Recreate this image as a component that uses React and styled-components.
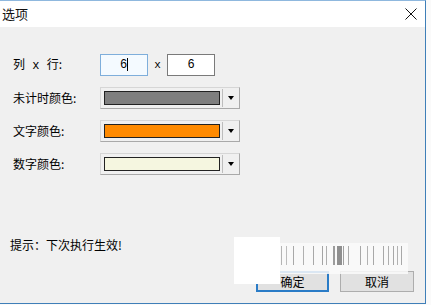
import React from 'react';
import styled, { createGlobalStyle } from 'styled-components';

const Global = createGlobalStyle`
  html, body { margin: 0; padding: 0; background: #fafafa; }
  body { font-family: "Noto Sans CJK SC", "Microsoft YaHei", sans-serif; color: #000; }
  * { box-sizing: border-box; }
`;

const Window = styled.div`
  position: relative;
  width: 426px;
  height: 304px;
  border-top: 1px solid #8fb8de;
  border-right: 1px solid #3f7fb8;
  border-bottom: 1px solid #3f7fb8;
  display: flex;
  flex-direction: column;
  background: #f0f0f0;
`;

const TitleBar = styled.div`
  height: 26px;
  flex: none;
  background: #fff;
  display: flex;
  align-items: center;
  justify-content: space-between;
  padding-left: 2px;
  padding-right: 8px;
  font-size: 13px;
  line-height: 16px;
  color: #111;
`;

const CloseIcon = styled.svg`
  display: block;
  width: 12px;
  height: 12px;
`;

const Body = styled.div`
  flex: 1;
  display: flex;
  flex-direction: column;
  padding: 21px 11px 11px 10px;
`;

const Form = styled.div`
  display: grid;
  grid-template-columns: 87px auto;
  grid-auto-rows: 33px;
  align-items: center;
  margin-left: 3px;
`;

const Label = styled.div`
  font-size: 12px;
  line-height: 16px;
  white-space: pre;
`;

const Mono = styled.span`
  font-family: "Liberation Mono", "DejaVu Sans Mono", monospace;
  font-size: 12px;
`;

const SizeRow = styled.div`
  display: flex;
  align-items: center;
`;

const TextBox = styled.div`
  width: 48px;
  height: 22px;
  border: 1px solid ${(p) => (p.$focused ? '#7eaedb' : '#7a7a7a')};
  background: ${(p) => (p.$focused ? '#f4faff' : '#fff')};
  display: flex;
  align-items: center;
  justify-content: center;
  font-family: "Liberation Mono", "DejaVu Sans Mono", monospace;
  font-size: 12px;
  line-height: 14px;
`;

const Caret = styled.span`
  display: inline-block;
  width: 1px;
  height: 13px;
  background: #000;
`;

const Times = styled.div`
  width: 19px;
  text-align: center;
  font-family: "Liberation Mono", "DejaVu Sans Mono", monospace;
  font-size: 11px;
  line-height: 14px;
`;

const Combo = styled.div`
  width: 140px;
  height: 22px;
  display: flex;
  align-items: center;
  background: #f0f0f0;
  border: 1px solid #d6d6d6;
  border-right-color: #a9a9a9;
  border-bottom-color: #a9a9a9;
  padding-left: 3px;
`;

const Swatch = styled.div`
  width: 116px;
  height: 14px;
  border: 1px solid #222;
  background: ${(p) => p.$color};
`;

const Divider = styled.div`
  width: 1px;
  height: 18px;
  margin-left: 2px;
  background: #bdbdbd;
`;

const Arrow = styled.div`
  flex: 1;
  display: flex;
  align-items: center;
  justify-content: center;
  &::after {
    content: '';
    border-left: 3.5px solid transparent;
    border-right: 3.5px solid transparent;
    border-top: 4px solid #000;
  }
`;

const Hint = styled.div`
  margin-top: auto;
  margin-bottom: 18px;
  font-size: 12px;
  line-height: 16px;
`;

const Footer = styled.div`
  display: flex;
  justify-content: flex-end;
  gap: 11px;
`;

const Button = styled.div`
  width: ${(p) => p.$w}px;
  height: 21px;
  display: flex;
  align-items: center;
  justify-content: center;
  font-size: 12px;
  line-height: 14px;
  background: #e1e1e1;
  border: ${(p) => (p.$primary ? '2px solid #2a7cc7' : '1px solid #adadad')};
`;

const WhiteBox = styled.div`
  position: absolute;
  left: 234px;
  top: 236px;
  width: 46px;
  height: 47px;
  background: #fff;
`;

const Stripes = styled.svg`
  position: absolute;
  left: 280px;
  top: 242px;
  width: 128px;
  height: 31px;
`;

const stripeData = [
  [1, 1, '#b4b4b4'], [6, 1, '#bcbcbc'], [13, 1, '#a8a8a8'], [23, 1, '#b0b0b0'],
  [33, 1, '#a8a8a8'], [42, 1, '#a4a4a4'], [46, 1, '#aeaeae'], [53, 2, '#9c9c9c'],
  [57, 5, '#8f8f8f'], [63, 1, '#a0a0a0'], [68, 1, '#acacac'], [80, 1, '#a8a8a8'],
  [87, 1, '#b2b2b2'], [93, 1, '#a8a8a8'], [103, 1, '#a8a8a8'], [108, 1, '#aeaeae'],
  [113, 1, '#a8a8a8'], [117, 1, '#b2b2b2'], [121, 1, '#a8a8a8'],
];

const colors = [
  { label: '未计时颜色:', color: '#7f7f7f' },
  { label: '文字颜色:', color: '#ff8a00' },
  { label: '数字颜色:', color: '#f5f6e0' },
];

export default function App() {
  return (
    <>
      <Global />
      <Window>
        <TitleBar>
          <span>选项</span>
          <CloseIcon viewBox="0 0 12 12">
            <path d="M0.5 0.5 L11.5 11.5 M11.5 0.5 L0.5 11.5" stroke="#111" strokeWidth="1" fill="none" />
          </CloseIcon>
        </TitleBar>
        <Body>
          <Form>
            <Label>
              列<Mono> x </Mono>行:
            </Label>
            <SizeRow>
              <TextBox $focused>
                6<Caret />
              </TextBox>
              <Times>x</Times>
              <TextBox>6</TextBox>
            </SizeRow>
            {colors.map((c) => (
              <React.Fragment key={c.label}>
                <Label>{c.label}</Label>
                <Combo>
                  <Swatch $color={c.color} />
                  <Divider />
                  <Arrow />
                </Combo>
              </React.Fragment>
            ))}
          </Form>
          <Hint>提示：下次执行生效!</Hint>
          <Footer>
            <Button $primary $w={73}>确定</Button>
            <Button $w={74}>取消</Button>
          </Footer>
        </Body>
        <WhiteBox />
        <Stripes viewBox="0 0 128 31">
          <rect x="0" y="0" width="128" height="31" fill="rgba(250,250,250,0.85)" />
          {stripeData.map(([x, w, c], i) => (
            <rect key={i} x={x} y="3" width={w} height="19" fill={c} />
          ))}
        </Stripes>
      </Window>
    </>
  );
}
